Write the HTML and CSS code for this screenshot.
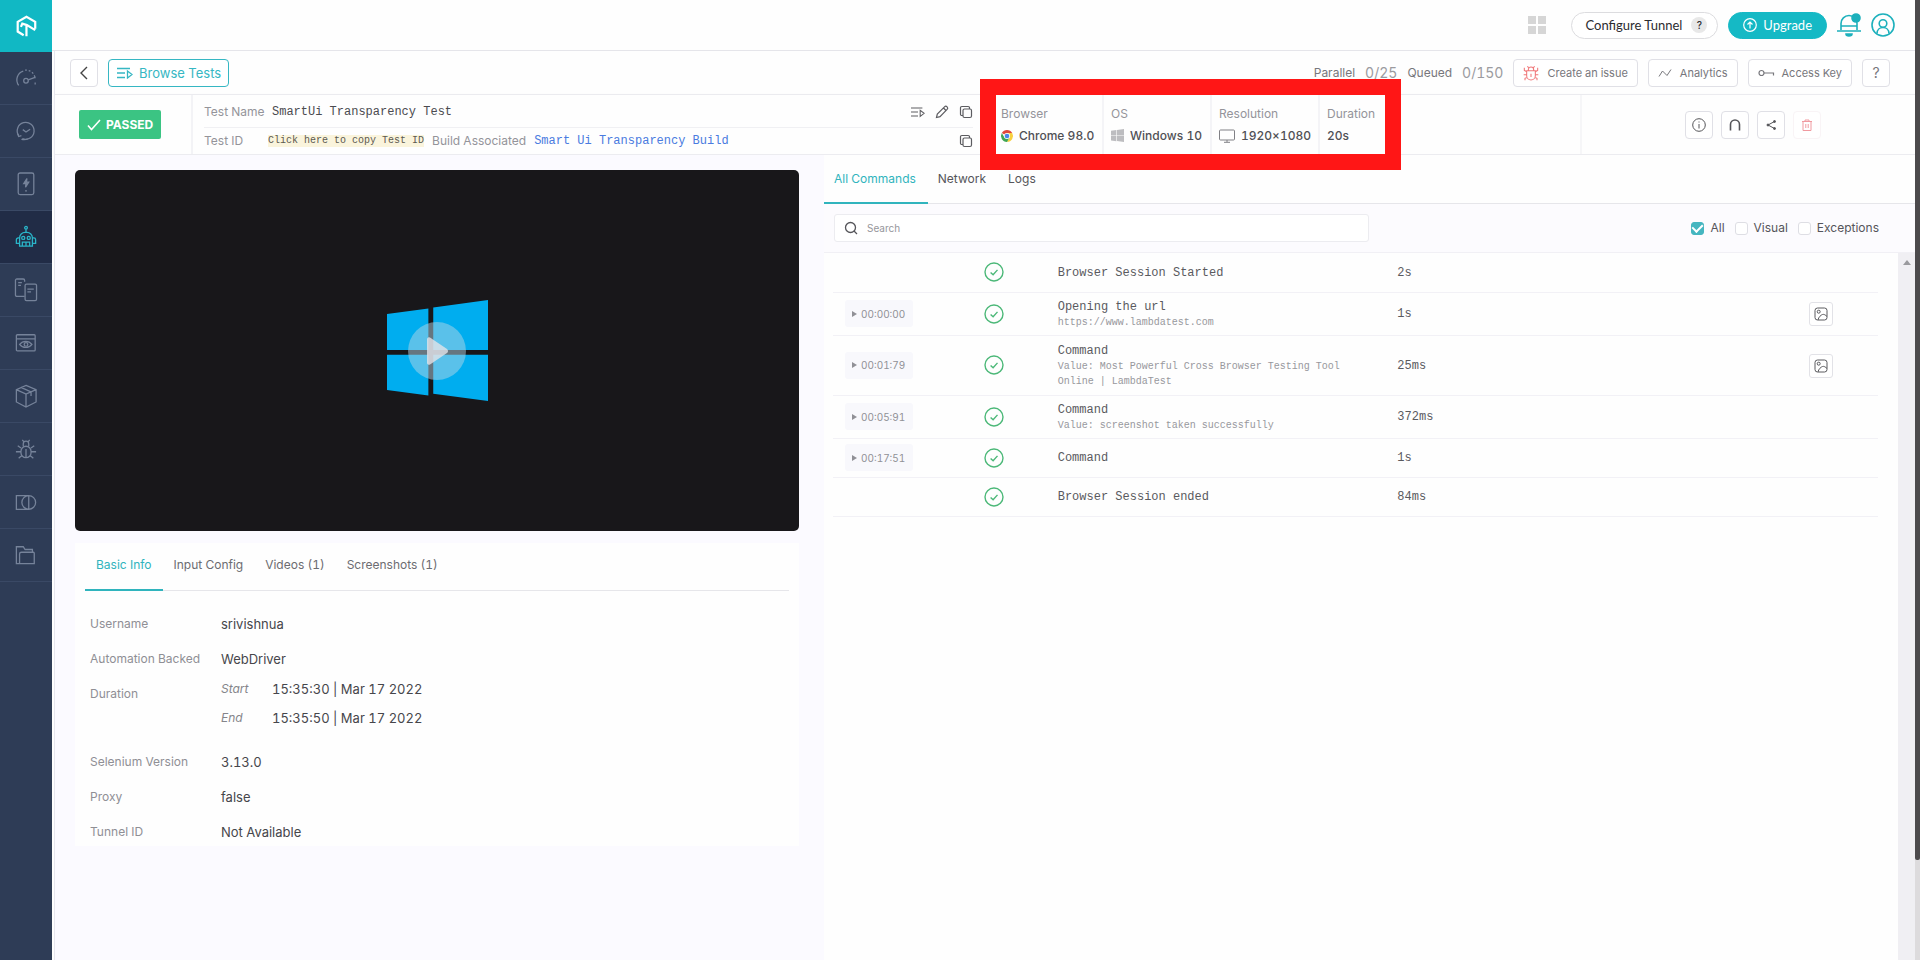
FILE: index.html
```html
<!DOCTYPE html>
<html lang="en">
<head>
<meta charset="utf-8">
<title>SmartUi Transparency Test</title>
<link rel="stylesheet" href="styles.css">
</head>
<body>
<svg class="defs" aria-hidden="true">
  <symbol id="ok" viewBox="0 0 20 20"><circle cx="10" cy="10" r="9"/><path d="M6.6 10.4l2.5 2.3 4.4-4.8"/></symbol>
  <symbol id="copy" viewBox="0 0 14 14"><rect x="4" y="4" width="8.5" height="8.5" rx="1.5"/><path d="M4 10.5H2.8A1.3 1.3 0 0 1 1.5 9.2V2.8a1.3 1.3 0 0 1 1.3-1.3h6.4a1.3 1.3 0 0 1 1.3 1.3V4"/></symbol>
  <symbol id="list" viewBox="0 0 16 12"><path d="M0 1.500h13M0 6h8M0 10.500h8M10.500 4v7l4.500-3.500z"/></symbol>
  <symbol id="image" viewBox="0 0 14 14"><rect x="1" y="1" width="12" height="12" rx="2.500"/><circle cx="4.700" cy="4.700" r="1.500"/><path d="M4 13c.5-3 3-5 4.500-5.500 1.500-.5 3 .5 4.500 2"/></symbol>
  <symbol id="win" viewBox="0 0 83 83"><path d="M0 11.500L34 7v34H0zM38 6.200L83 0v41H38zM0 45h34v33.500L0 74zM38 45h45v38l-45-6z"/></symbol>
  <symbol id="bug" viewBox="0 0 24 24"><path d="M12 9a5.500 5.500 0 0 1 5.500 5.500v1.500a5.500 5.500 0 0 1-11 0v-1.500A5.500 5.500 0 0 1 12 9zM12 12v9M9 9V6.500a3 3 0 0 1 6 0V9M9.500 4L8 2M14.500 4L16 2M6.500 11L3 8.500M17.500 11L21 8.500M6.500 15H1M17.500 15H23M7.500 19L4 22M16.500 19l3.500 3"/></symbol>
  <symbol id="beetle" viewBox="0 0 24 24"><path d="M5.500 8.500h13V16a6.500 6.500 0 0 1-13 0zM8 8.500V7a4 4 0 0 1 8 0v1.500M12 13v5M8.500 4L6.500 2M15.500 4l2-2M5.500 10L2 8V4M18.500 10L22 8V4M5.500 14.500H1M18.500 14.500H23M6.500 18.500L3 20v3M17.500 18.500L21 20v3"/></symbol>
</svg>

<div class="app">
  <nav class="side" aria-label="Main">
    <a class="brand" href="#" aria-label="Home"><svg viewBox="0 0 24 26"><path d="M9.500 23L3 19V8.500L12.500 3 22 8.500V16M6.500 14l1.500-3.500 5 1.500 9 5.500M12.500 12v12"/></svg></a>
    <a href="#" aria-label="Dashboard"><svg viewBox="0 0 24 24"><path d="M4 20A10 10 0 0 1 9 4.500"/><path d="M11 3.500A10 10 0 0 1 22 13" stroke-dasharray="2 2"/><path d="M22 19v-2"/><circle cx="12" cy="15" r="2.500"/><path d="M14.500 14l8-3"/></svg></a>
    <a href="#" aria-label="Real time"><svg viewBox="0 0 24 24"><path d="M4 17A9.200 9.200 0 1 1 8 20.300"/><path d="M7 21a9 9 0 0 0 7-.5M3 15l1 3 3-1M8.500 10.500l3.500 2.500 4.500-3"/></svg></a>
    <a href="#" aria-label="App testing"><svg viewBox="0 0 24 24"><rect x="3.500" y="0" width="17" height="23.500" rx="2"/><path class="solid" d="M13 6L9.500 11.500H12l-.5 4 3.500-5.500h-2.500z"/><path d="M11 19.500h2"/></svg></a>
    <a class="on" href="#" aria-label="Automation"><svg viewBox="0 0 24 24"><circle cx="12" cy="2" r="1.500"/><path d="M12 3.500V7M5 22v-9a6 6 0 0 1 6-6h2a6 6 0 0 1 6 6v9zM5 13H3.500a2 2 0 0 0-2 2v4h3.500M19 13h1.500a2 2 0 0 1 2 2v4H19M8 22v-4.500h8V22M12 17.500V22"/><circle cx="9" cy="13" r="1.700"/><circle cx="15" cy="13" r="1.700"/></svg></a>
    <a href="#" aria-label="Mobile"><svg viewBox="0 0 24 24"><path d="M10.500 19H2a1.500 1.500 0 0 1-1.500-1.500v-16A1.500 1.500 0 0 1 2 0h7a1.500 1.500 0 0 1 1.500 1.500V3M3.500 4h4M3.500 7h3"/><rect x="11" y="5.500" width="12.500" height="18" rx="1.500"/><path d="M13.500 11h7M13.500 14h4"/></svg></a>
    <a href="#" aria-label="Visual"><svg viewBox="0 0 24 24"><rect x="1.500" y="3" width="20.500" height="17.500" rx="1"/><path d="M1.500 7.500H22M5 13.500c3.500-4.500 10-4.500 13.500 0-3.500 4.500-10 4.500-13.500 0z"/><circle cx="12" cy="13.500" r="2"/></svg></a>
    <a href="#" aria-label="Integrations"><svg viewBox="0 0 24 24"><path d="M12 .5L23 5v13.500L12 24 1.500 18.500V5zM1.500 5L12 10l11-5M12 10v14M6.500 2.500L17.500 7.500V12"/></svg></a>
    <a href="#" aria-label="Issues"><svg><use href="#bug"/></svg></a>
    <a href="#" aria-label="Compare"><svg viewBox="0 0 24 24"><path d="M12 20H1.500V5H15a7.500 7.500 0 0 1 0 15h-3M15 5a7.500 7.500 0 0 0 0 15M15 5v15"/></svg></a>
    <a href="#" aria-label="Projects"><svg viewBox="0 0 24 24"><path d="M5 21.500H1.500V3H9l2 3h8v3M5 21.500V11a2 2 0 0 1 2-2h13a1 1 0 0 1 1 1v11.500z"/></svg></a>
  </nav>

  <div class="page">
    <header class="top">
      <button class="plain" aria-label="Apps"><svg class="apps" viewBox="0 0 18 18"><path d="M0 0h8v8H0zM10 0h8v8h-8zM0 10h8v8H0zM10 10h8v8h-8z"/></svg></button>
      <button class="pill">Configure Tunnel <span class="hint">?</span></button>
      <button class="pill upgrade"><svg viewBox="0 0 14 14"><circle cx="7" cy="7" r="6.300"/><path d="M7 10.500v-6M4.500 6.500L7 4l2.500 2.500"/></svg>Upgrade</button>
      <button class="plain bell" aria-label="Notifications"><svg viewBox="0 0 24 26"><path d="M4 18v-6.500a8 8 0 0 1 16 0V18M0 19h24M4 14h16"/><path class="fill" d="M9 22h6a3 2 0 0 1-6 0z"/><circle class="fill" cx="19" cy="6" r="4"/></svg></button>
      <button class="plain user" aria-label="Account"><svg viewBox="0 0 24 24"><circle cx="12" cy="12" r="11"/><circle cx="12" cy="10.500" r="3.800"/><path d="M6 20.500c0-8 12-8 12 0"/></svg></button>
    </header>

    <div class="main">
      <div class="tools">
        <button class="box sq" aria-label="Back"><svg class="back" viewBox="0 0 8 14"><path d="M7 1L1 7l6 6"/></svg></button>
        <button class="box browse"><svg><use href="#list"/></svg>Browse Tests</button>
        <div class="quota"><span>Parallel</span><b>0/25</b><span>Queued</span><b>0/150</b></div>
        <button class="box"><svg class="red"><use href="#beetle"/></svg>Create an issue</button>
        <button class="box"><svg class="wave" viewBox="0 0 14 10"><path d="M1 8.500L4.500 3l4.500 4.500L13 1.500"/></svg>Analytics</button>
        <button class="box"><svg class="key" viewBox="0 0 16 8"><circle cx="3.500" cy="4" r="2.500"/><path d="M6 4h9.500v2.500"/></svg>Access Key</button>
        <button class="box sq big">?</button>
      </div>

      <div class="test">
        <div class="status"><span class="passed"><svg viewBox="0 0 14 12"><path d="M1 6.500l3.500 4L13 1"/></svg>PASSED</span></div>
        <div class="names">
          <div class="line">
            <span class="lab">Test Name</span><span class="mono">SmartUi Transparency Test</span>
            <span class="acts"><button class="plain" aria-label="Queue"><svg class="lst"><use href="#list"/></svg></button><button class="plain" aria-label="Rename"><svg viewBox="0 0 14 14"><path d="M1.500 12.500l.8-3.500 7.200-7.200a1.700 1.700 0 0 1 2.600 2.600L5 11.700zM8.500 3L11 5.500"/></svg></button><button class="plain" aria-label="Copy name"><svg><use href="#copy"/></svg></button></span>
          </div>
          <div class="line">
            <span class="lab">Test ID</span><button class="copyid">Click here to copy Test ID</button><span>Build Associated</span><a class="mono build" href="#">Smart Ui Transparency Build</a>
            <span class="acts"><button class="plain" aria-label="Copy ID"><svg><use href="#copy"/></svg></button></span>
          </div>
        </div>
        <dl class="specs">
          <div><dt>Browser</dt><dd><svg class="chrome" viewBox="0 0 24 24"><path fill="#e0483c" d="M12 12L1.600 6a12 12 0 0 1 20.800 0z"/><path fill="#f8cf3e" d="M12 12V6h10.400A12 12 0 0 1 12 24l5.200-9z"/><path fill="#3fa553" d="M1.600 6A12 12 0 0 0 12 24l5.200-9H6.800z"/><circle cx="12" cy="12" r="6" fill="#fff"/><circle cx="12" cy="12" r="4.700" fill="#4a86e8"/></svg>Chrome 98.0</dd></div>
          <div><dt>OS</dt><dd><svg class="winsm"><use href="#win"/></svg>Windows 10</dd></div>
          <div><dt>Resolution</dt><dd><svg class="mon" viewBox="0 0 16 14"><rect x=".5" y="1" width="15" height="10" rx="1"/><path d="M5 13.300h6M8 11v2"/></svg>1920×1080</dd></div>
          <div><dt>Duration</dt><dd>20s</dd></div>
        </dl>
        <div class="ops">
          <button class="box sq" aria-label="Info"><svg viewBox="0 0 14 14"><circle cx="7" cy="7" r="6.300"/><path d="M7 6v4.500M7 3.500v1"/></svg></button>
          <button class="box sq" aria-label="Underpass"><svg viewBox="0 0 14 14"><path d="M2.500 12.500V6.500a4.500 4.500 0 0 1 9 0v6" stroke-width="1.600"/></svg></button>
          <button class="box sq" aria-label="Share"><svg viewBox="0 0 14 14"><path d="M10.500 3.500L4 7l6.500 3.500"/><g class="solid"><circle cx="10.500" cy="3.500" r="1"/><circle cx="4" cy="7" r="1"/><circle cx="10.500" cy="10.500" r="1"/></g></svg></button>
          <button class="box sq del" aria-label="Delete"><svg viewBox="0 0 14 14"><path d="M2 3.500h10M5 3.500V2h4v1.500M3 3.500V12.500h8V3.500M5.800 6v4M8.200 6v4"/></svg></button>
        </div>
      </div>

      <div class="cols">
        <section class="left">
          <div class="video">
            <svg class="winbig"><use href="#win"/></svg>
            <button class="play" aria-label="Play"><svg viewBox="0 0 24 30"><path d="M2 3v24a2 2 0 0 0 3 1.500L22 17a2.500 2.500 0 0 0 0-4L5 1.500A2 2 0 0 0 2 3z"/></svg></button>
          </div>
          <div class="card">
            <div class="tabs"><button class="tab on">Basic Info</button><button class="tab">Input Config</button><button class="tab">Videos (1)</button><button class="tab">Screenshots (1)</button></div>
            <dl class="info">
              <dt>Username</dt><dd>srivishnua</dd>
              <dt>Automation Backed</dt><dd>WebDriver</dd>
              <dt>Duration</dt><dd class="times"><span><i>Start</i>15:35:30 | Mar 17 2022</span><span><i>End</i>15:35:50 | Mar 17 2022</span></dd>
              <dt>Selenium Version</dt><dd>3.13.0</dd>
              <dt>Proxy</dt><dd>false</dd>
              <dt>Tunnel ID</dt><dd>Not Available</dd>
            </dl>
          </div>
        </section>

        <section class="right">
          <div class="tabs"><button class="tab on">All Commands</button><button class="tab">Network</button><button class="tab">Logs</button></div>
          <div class="filter">
            <label class="search"><svg viewBox="0 0 14 14"><circle cx="6.500" cy="6.500" r="5"/><path d="M10 10l3 3"/></svg><input type="text" placeholder="Search" aria-label="Search"></label>
            <div class="checks">
              <label><input type="checkbox" checked>All</label>
              <label><input type="checkbox">Visual</label>
              <label><input type="checkbox">Exceptions</label>
            </div>
          </div>
          <div class="list">
            <div class="rows">
              <table>
                <colgroup><col class="c1"><col class="c2"><col class="c3"><col class="c4"><col></colgroup>
                <tbody>
                <tr><td></td><td class="st"><svg><use href="#ok"/></svg></td><td>Browser Session Started</td><td>2s</td><td></td></tr>
                <tr><td class="tm"><button class="chip">00:00:00</button></td><td class="st"><svg><use href="#ok"/></svg></td><td>Opening the url<small>https://www.lambdatest.com</small></td><td>1s</td><td><button class="shot" aria-label="Screenshot"><svg><use href="#image"/></svg></button></td></tr>
                <tr><td class="tm"><button class="chip">00:01:79</button></td><td class="st"><svg><use href="#ok"/></svg></td><td>Command<small>Value: Most Powerful Cross Browser Testing Tool Online | LambdaTest</small></td><td>25ms</td><td><button class="shot" aria-label="Screenshot"><svg><use href="#image"/></svg></button></td></tr>
                <tr><td class="tm"><button class="chip">00:05:91</button></td><td class="st"><svg><use href="#ok"/></svg></td><td>Command<small>Value: screenshot taken successfully</small></td><td>372ms</td><td></td></tr>
                <tr><td class="tm"><button class="chip">00:17:51</button></td><td class="st"><svg><use href="#ok"/></svg></td><td>Command</td><td>1s</td><td></td></tr>
                <tr><td></td><td class="st"><svg><use href="#ok"/></svg></td><td>Browser Session ended</td><td>84ms</td><td></td></tr>
                </tbody>
              </table>
            </div>
            <div class="track"><svg viewBox="0 0 8 5"><path d="M0 5l4-5 4 5z"/></svg></div>
          </div>
        </section>
      </div>
    </div>
  </div>
  <div class="scroll"><div class="thumb"></div></div>
</div>
</body>
</html>
```

FILE: styles.css
```css
* { box-sizing: border-box; }
body { margin: 0; font: 12px/16px Inter, "Liberation Sans", sans-serif; font-variant-numeric: tabular-nums; color: #55555a; background: #fefefe; }
button, input { font: inherit; font-variant-numeric: inherit; color: inherit; }
button { cursor: pointer; }
a { text-decoration: none; color: inherit; }
dl, dd { margin: 0; }
svg { display: block; flex: none; width: 14px; height: 14px; fill: none; stroke: currentColor; stroke-width: 1; overflow: visible; }
.defs { position: absolute; width: 0; height: 0; }
.solid, .fill { fill: currentColor; }
.plain { border: 0; background: none; padding: 0; }

.app { display: flex; min-height: 100vh; }
.page { flex: 1; min-width: 0; display: flex; flex-direction: column; }

/* sidebar */
.side { width: 52px; background: #2e3c56; color: #76839a; }
.side a { display: flex; align-items: center; justify-content: center; height: 53px; border-bottom: 1px solid #3a4965; }
.side svg { width: 22px; height: 22px; stroke-width: 1.4; }
.side .brand { height: 52px; background: #11b8c4; color: #fff; border: 0; }
.side .brand svg { width: 24px; height: 24px; stroke-width: 2.4; }
.side .on { background: #212c46; color: #2ab5c9; }

/* top bar */
.top { display: flex; justify-content: flex-end; align-items: center; height: 51px; padding-right: 20px; border-bottom: 1px solid #e5e5ea; font: 13px/18px Lato, sans-serif; }
.apps { width: 18px; height: 18px; fill: #d6d6d6; stroke: none; margin-right: 25px; }
.pill { display: flex; align-items: center; gap: 9px; height: 27px; padding: 0 10px 0 14px; border: 1px solid #dcdcdf; border-radius: 14px; background: #fff; color: #2c2c30; }
.hint { width: 16px; height: 16px; border-radius: 50%; background: #e8e8e8; font: 500 10px/16px Inter, sans-serif; }
.upgrade { gap: 6px; margin: 0 10px; padding: 0 14px; background: #15b9c5; border-color: #15b9c5; color: #fff; }
.upgrade svg { stroke-width: 1.2; }
.bell, .user { color: #1cb0bc; }
.bell { margin-right: 10px; }
.bell svg { width: 24px; height: 26px; stroke-width: 1.6; }
.user svg { width: 24px; height: 24px; stroke-width: 1.6; }

.main { flex: 1; display: flex; flex-direction: column; margin-left: 2px; border-left: 1px solid #e6e6ee; }

/* toolbar */
.tools { display: flex; align-items: center; gap: 10px; height: 44px; padding: 0 25px 0 15px; border-bottom: 1px solid #e9e9ed; color: #77777c; font-size: 11px; }
.box { display: flex; align-items: center; justify-content: center; gap: 8px; height: 28px; padding: 0 9px; border: 1px solid #e0e0e6; border-radius: 4px; background: #fff; }
.sq { width: 28px; padding: 0; }
.big { font-size: 14px; }
.back { width: 8px; height: 14px; stroke-width: 1.4; color: #444; }
.browse { gap: 6px; padding: 0 7px 0 8px; border-color: #36b7c3; color: #36b7c3; font-size: 13px; }
.browse svg { width: 16px; height: 12px; stroke-width: 1.3; }
.red { width: 16px; height: 16px; color: #f0787a; stroke-width: 1.6; }
.wave { height: 10px; }
.key { width: 16px; height: 8px; stroke-width: 1.2; }
.quota { display: flex; align-items: center; gap: 10px; margin-left: auto; font-size: 12px; }
.quota b { font-weight: 400; font-size: 14px; color: #9b9ba0; }

/* test summary */
.test { display: flex; height: 60px; border-bottom: 1px solid #ececf0; box-shadow: 0 1px 4px #f0f0f4; color: #94949a; }
.status { width: 138px; display: flex; align-items: center; padding-left: 24px; border-right: 2px solid #f3f3f6; }
.passed { display: flex; align-items: center; gap: 5px; height: 29px; padding: 0 8px; border-radius: 2px; background: #3bc483; color: #fff; font-weight: 700; }
.passed svg { height: 12px; stroke-width: 1.6; }
.names { flex: 0 1 787px; padding: 0 7px 0 11px; }
.line { display: flex; align-items: center; height: 32px; padding-top: 2px; gap: 8px; white-space: nowrap; }
.line + .line { border-top: 1px solid #f0f0f3; height: 27px; padding: 0; }
.line .lab { width: 56px; }
.line .lab + .mono { margin-left: 4px; }
.mono { font-family: "Liberation Mono", monospace; color: #4b4b50; }
.build { color: #4a7be0; }
.copyid { border: 0; padding: 0; background: #faf4dc; font: 10px/12px "Liberation Mono", monospace; color: #5c5a50; }
.acts { display: flex; gap: 10px; margin-left: auto; color: #5c5c60; }
.acts svg { stroke-width: 1.2; }
.lst { height: 12px; }
.specs { position: relative; z-index: 1; flex: none; display: grid; grid-template-columns: 106px 108px 108px 67px; }
.specs::after { content: ""; position: absolute; inset: -16px; border: 16px solid #ff1616; pointer-events: none; }
.names + .specs { margin-left: 16px; }
.specs div { display: grid; align-content: center; gap: 6px; padding: 0 7px; border-left: 2px solid #f4f4f7; white-space: nowrap; }
.specs div:first-child { border: 0; padding-left: 5px; }
.specs dd { display: flex; align-items: center; gap: 6px; color: #505055; font-weight: 500; }
.chrome { width: 12px; height: 12px; stroke: none; }
.winsm { width: 13px; height: 13px; fill: #bdbdc0; stroke: none; }
.mon { width: 16px; color: #808085; }
.ops { display: flex; align-items: center; gap: 8px; width: 335px; margin-left: auto; padding-left: 103px; border-left: 2px solid #f6f6f8; color: #555559; }
.del { color: #f09aa0; border-color: #f9f4f6; }

/* columns */
.cols { flex: 1; display: grid; grid-template-columns: minmax(0, 769fr) minmax(0, 1091fr); background: #fbfaff; }
.left { padding: 15px 25px 20px 20px; }
.video { position: relative; display: grid; place-items: center; aspect-ratio: 724 / 361; border-radius: 5px; background: #18171a; }
.winbig { width: 101px; height: 101px; fill: #00adef; stroke: none; }
.play { position: absolute; top: 50%; left: 50%; width: 58px; height: 58px; margin: -29px; border: 0; border-radius: 50%; background: #b4d6e680; display: grid; place-items: center; }
.play svg { width: 24px; height: 30px; fill: #e4e4e8cc; stroke: none; }
.card { margin-top: 12px; padding: 0 10px 4px; background: #fefefe; }
.tabs { display: flex; border-bottom: 1px solid #e6e6ea; }
.tab { border: 0; border-bottom: 2px solid transparent; margin: 0 0 -1px; padding: 15px 12px 16px 10px; background: none; color: #6c6c71; }
.tab.on { color: #30b4bd; border-color: #30b4bd; }
.card .tab { padding: 14px 11px 16px; }
.info { display: grid; grid-template-columns: 131px 1fr; row-gap: 15px; padding: 23px 5px 0; line-height: 20px; color: #8f8f95; }
.info dd { font-size: 13px; color: #46464b; }
.times { display: grid; gap: 9px; margin: -5px 0 9px; }
.times span { display: flex; }
.times i { width: 51px; font-size: 12px; color: #85858a; }

.right { display: flex; flex-direction: column; background: #fefefe; }
.right .tab { padding-top: 16px; padding-bottom: 15px; color: #55555a; }
.right .tab.on { color: #30b4bd; }
.filter { display: flex; align-items: center; justify-content: space-between; height: 49px; padding: 0 36px 0 10px; background: #fcfbfe; border-bottom: 1px solid #f1f0f5; }
.search { display: flex; align-items: center; gap: 9px; flex: 0 1 535px; height: 28px; padding: 0 9px; border: 1px solid #ececf0; border-radius: 3px; background: #fff; }
.search svg { stroke-width: 1.3; }
.search input { flex: 1; min-width: 0; border: 0; padding: 0; background: none; font-size: 10px; outline: 0; }
.search input::placeholder { color: #96969b; opacity: 1; }
.checks { display: flex; gap: 10px; }
.checks label { display: flex; align-items: center; gap: 6px; }
.checks input { appearance: none; width: 13px; height: 13px; margin: 0; border: 1px solid #dedee4; border-radius: 3px; background: #fff; display: grid; place-items: center; }
.checks input:checked { background: #45b6c0; border-color: #45b6c0; }
.checks input:checked::after { content: ""; width: 5px; height: 8px; margin-top: -2px; border: solid #fff; border-width: 0 2px 2px 0; transform: rotate(45deg); }
.list { flex: 1; display: flex; }
.rows { flex: 1; padding: 0 20px 0 9px; }
.track { width: 17px; background: #f0eff3; padding-top: 7px; }
.track svg { width: 8px; height: 5px; margin: 0 auto; fill: #9a9a9e; stroke: none; }
table { width: 100%; table-layout: fixed; border-collapse: collapse; font-family: "Liberation Mono", monospace; color: #5a5a5e; }
td { height: 39px; padding: 6px 22px 5px; border-bottom: 1px solid #f2f1f6; }
td small { display: block; font-size: 10px; line-height: 15px; color: #98989d; }
tr:nth-child(3) td { height: 60px; }
.c1 { width: 11.4%; } .c2 { width: 8%; } .c3 { width: 32.5%; } .c4 { width: 39.4%; }
.tm { padding: 0 0 0 12px; }
.st { padding: 0; }
.st svg { width: 20px; height: 20px; margin: 0 auto; color: #4cb878; stroke-width: 1.4; }
.chip { display: flex; align-items: center; gap: 4px; height: 27px; padding: 0 8px 0 7px; border: 0; border-radius: 3px; background: #f8f8fc; font-family: Inter, sans-serif; font-size: 10px; color: #909096; }
.chip::before { content: ""; border: 3px solid transparent; border-left: 5px solid #909096; border-right: 0; }
.shot { display: grid; place-items: center; width: 24px; height: 24px; padding: 0; border: 1px solid #e2e2e7; border-radius: 3px; background: #fff; }

/* window scroll bar */
.scroll { width: 5px; background: #dddbdd; }
.thumb { height: 89.6vh; background: #4c4a4c; border-radius: 0 0 2px 2px; }
```
